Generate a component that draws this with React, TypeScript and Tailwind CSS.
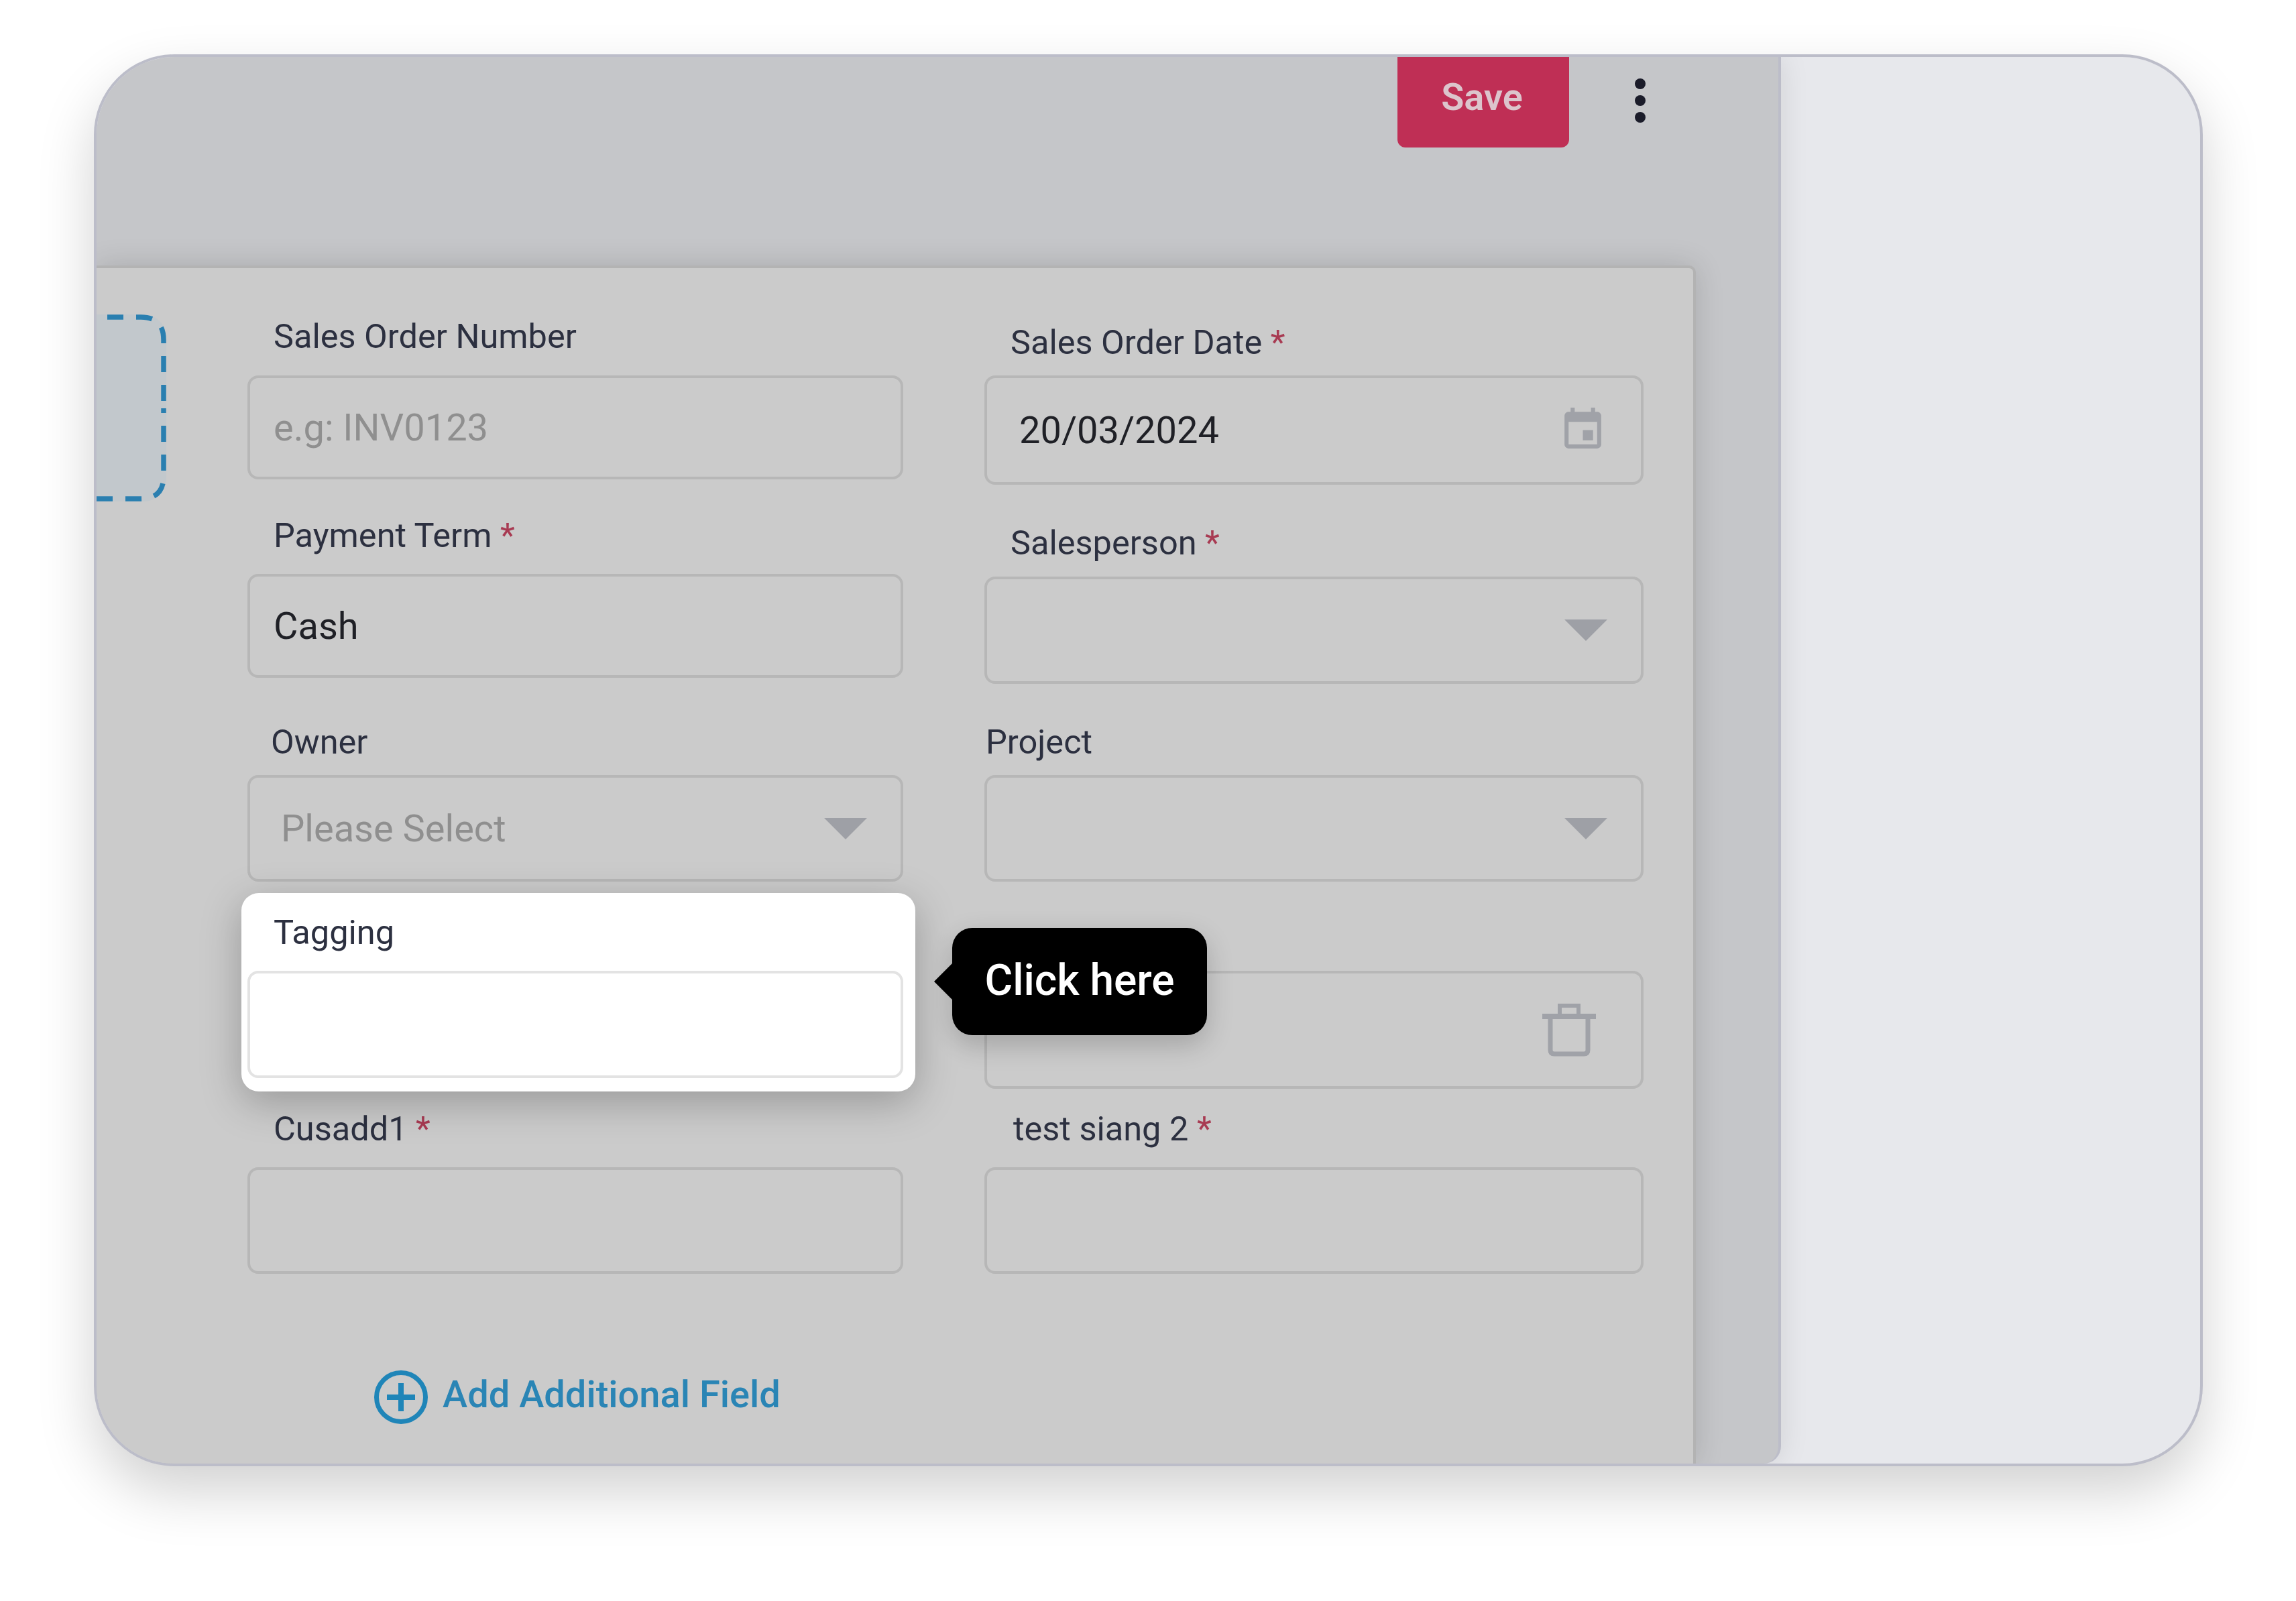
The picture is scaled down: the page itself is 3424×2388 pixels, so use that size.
import React from "react";

const Star = () => <span className="text-[#a83a52]"> *</span>;

function Label({ children, className }: { children: React.ReactNode; className: string }) {
  return <div className={`h-[60px] text-[50.5px] leading-[60px] text-[#2c3040] whitespace-nowrap ${className}`}>{children}</div>;
}

function Box({ children, className }: { children?: React.ReactNode; className: string }) {
  return <div className={`flex items-center justify-between rounded-[16px] border-4 border-[#b7b7b7] ${className}`}>{children}</div>;
}

const Caret = () => (
  <svg viewBox="0 0 64 32" className="w-[64px] h-[32px] shrink-0 text-[#9ea0a6]">
    <path d="M0 0h64L32 32z" fill="currentColor" />
  </svg>
);

export default function App() {
  return (
    <div className="w-[3424px] h-[2388px] bg-white pl-[140px] pt-[81px] font-['Roboto',sans-serif]">
      <div className="w-[3145px] h-[2106px] rounded-[120px] border-4 border-[#bcbdc9] bg-[#e7e8ec] overflow-hidden shadow-[0_38px_84px_rgba(0,0,0,0.18)]">
        <div className="w-[2512px] h-full bg-[#c5c6c9] border-r-4 border-[#bcbdc9] rounded-br-[26px] shadow-[0_0_44px_rgba(0,0,0,0.1)] flex flex-col">
          <div className="h-[311px] shrink-0 flex justify-end items-start pr-[196px]">
            <div className="w-[256px] h-[135px] bg-[#bf2f55] rounded-b-[12px] flex items-start justify-center pt-[28px] pr-[4px] text-[56px] leading-[64px] font-semibold text-[#dcc4cc] blur-[0.6px]">Save</div>
            <div className="w-[18px] ml-[98px] mt-[32px] flex flex-col gap-[9px]">
              <div className="w-[16px] h-[16px] rounded-full bg-[#1b1c2a]" />
              <div className="w-[16px] h-[16px] rounded-full bg-[#1b1c2a]" />
              <div className="w-[16px] h-[16px] rounded-full bg-[#1b1c2a]" />
            </div>
          </div>
          <div className="w-[2385px] flex-1 bg-[#cbcbcb] border-t-4 border-r-4 border-[#b3b3b3] rounded-tr-[10px] shadow-[0_0_44px_rgba(0,0,0,0.14)] overflow-hidden">
            <div className="flex items-start blur-[0.7px]">
              <div className="w-[104px] h-[279px] mt-[69px] shrink-0 bg-[#c2c8cc] rounded-r-[34px]">
                <svg viewBox="0 0 104 279" className="w-[104px] h-[279px]" fill="none" stroke="#2a7fb0" strokeWidth="7.5" strokeDasharray="24 19">
                  <path d="M16 4H66Q100 4 100 38V140" />
                  <path d="M0 275H66Q100 275 100 241V140" />
                </svg>
              </div>

              <div className="w-[978px] ml-[121px] shrink-0 flex flex-col">
                <Label className="mt-[72px] mb-[28px] pl-[39px]">Sales Order Number</Label>
                <Box className="h-[155px] pl-[35px] text-[56px] text-[#8f8f8f]">e.g: INV0123</Box>
                <Label className="mt-[54px] mb-[27px] pl-[39px]">Payment Term<Star /></Label>
                <Box className="h-[155px] pl-[35px] text-[56px] text-[#1f2026]">Cash</Box>
                <Label className="mt-[66px] mb-[19px] pl-[35px]">Owner</Label>
                <Box className="h-[159px] pl-[46px] pr-[50px] text-[56px] text-[#8f8f8f]">Please Select<Caret /></Box>

                <div className="relative z-10 mt-[17px] -ml-[9px] -mr-[18px] pl-[9px] pr-[18px] pt-[29px] pb-[20px] h-[296px] bg-white rounded-[26px] shadow-[0_16px_60px_rgba(0,0,0,0.25)]">
                  <Label className="mb-[27px] pl-[39px]">Tagging</Label>
                  <Box className="h-[160px] !border-[#e3e3e3] bg-white" />
                  <div className="absolute left-[1060px] top-[52px] w-[380px] h-[160px] rounded-[30px] bg-black shadow-[0_14px_40px_rgba(0,0,0,0.2)] flex items-center justify-center text-[64px] font-medium text-white whitespace-nowrap">
                    <div className="absolute -left-[27px] top-[52px] border-y-[28px] border-r-[28px] border-y-transparent border-r-black" />
                    <span className="-mt-[3px]">Click here</span>
                  </div>
                </div>

                <Label className="mt-[26px] mb-[27px] pl-[39px]">Cusadd1<Star /></Label>
                <Box className="h-[159px]" />
                <div className="mt-[144px] ml-[189px] flex items-center gap-[22px]">
                  <svg viewBox="0 0 80 80" className="w-[80px] h-[80px] shrink-0" fill="none" stroke="#1f85b8">
                    <circle cx="40" cy="40" r="36.5" strokeWidth="7" />
                    <path d="M19 40h42M40 19v42" strokeWidth="8" />
                  </svg>
                  <div className="text-[56px] leading-[68px] font-medium text-[#2a85b5] -mt-[9px] whitespace-nowrap">Add Additional Field</div>
                </div>
              </div>

              <div className="w-[983px] ml-[121px] shrink-0 flex flex-col">
                <Label className="mt-[81px] mb-[19px] pl-[39px]">Sales Order Date<Star /></Label>
                <Box className="h-[163px] pl-[48px] pr-[50px] text-[56px] text-[#1f2026]">
                  20/03/2024
                  <svg viewBox="0 0 24 24" className="w-[73px] h-[73px] text-[#a0a2a8]" fill="currentColor">
                    <path d="M17 12h-5v5h5v-5zM16 1v2H8V1H6v2H5c-1.11 0-1.99.9-1.99 2L3 19c0 1.1.89 2 2 2h14c1.1 0 2-.9 2-2V5c0-1.1-.9-2-2-2h-1V1h-2zm3 18H5V8h14v11z" />
                  </svg>
                </Box>
                <Label className="mt-[57px] mb-[20px] pl-[39px]">Salesperson<Star /></Label>
                <Box className="h-[160px] justify-end pr-[50px]"><Caret /></Box>
                <Label className="mt-[57px] mb-[19px] pl-[2px]">Project</Label>
                <Box className="h-[159px] justify-end pr-[50px]"><Caret /></Box>
                <Box className="mt-[133px] h-[176px] justify-end pr-[67px]">
                  <svg viewBox="0 0 80 80" className="w-[80px] h-[80px] text-[#a0a2a8]" fill="none" stroke="currentColor">
                    <path d="M0 20h80" strokeWidth="8" />
                    <path d="M26 17V4h28v13" strokeWidth="6" />
                    <path d="M12 24v46q0 6 6 6h44q6 0 6-6V24" strokeWidth="7" />
                  </svg>
                </Box>
                <Label className="mt-[30px] mb-[27px] pl-[43px]">test siang 2<Star /></Label>
                <Box className="h-[159px]" />
              </div>
            </div>
          </div>
        </div>
      </div>
    </div>
  );
}
